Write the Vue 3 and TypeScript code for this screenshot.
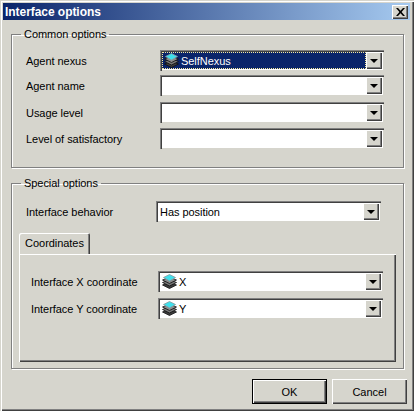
<script setup lang="ts">
interface Row { label: string; value?: string; icon?: boolean; selected?: boolean; cls: string }
const common: Row[] = [
  { label: 'Agent nexus', value: 'SelfNexus', icon: true, selected: true, cls: 'r1' },
  { label: 'Agent name', cls: 'r2' },
  { label: 'Usage level', cls: 'r3' },
  { label: 'Level of satisfactory', cls: 'r4' },
]
const coords: Row[] = [
  { label: 'Interface X coordinate', value: 'X', icon: true, cls: 'c1' },
  { label: 'Interface Y coordinate', value: 'Y', icon: true, cls: 'c2' },
]
</script>

<template>
  <div class="window">
    <div class="titlebar">
      <span class="title">Interface options</span>
      <button class="close" aria-label="Close">
        <svg width="9" height="8" viewBox="0 0 9 8"><path d="M0 0h2l2.5 2.7L7 0h2L5.600 4 9 8H7L4.500 5.300 2 8H0l3.400-4z" fill="#000"/></svg>
      </button>
    </div>

    <fieldset class="group common">
      <legend>Common options</legend>
      <div v-for="r in common" :key="r.label" class="row" :class="r.cls">
        <span class="lbl">{{ r.label }}</span>
        <div class="combo">
          <div class="field" :class="{ sel: r.selected }">
            <svg v-if="r.icon" class="stack" width="15" height="15" viewBox="0 0 15 15">
              <path d="M7.500 8L14.500 11 7.500 14.500 .5 11z" fill="#3a3a3a" stroke="#111" stroke-width=".8"/>
              <path d="M7.500 5.500L14.500 8.500 7.500 12 .5 8.500z" fill="#777" stroke="#111" stroke-width=".8"/>
              <path d="M7.500 3L14.500 6 7.500 9.500 .5 6z" fill="#8a8a8a" stroke="#111" stroke-width=".8"/>
              <path d="M7.500 .5L13.500 3.500 7.500 7 1.500 3.500z" fill="#3fe0ec" stroke="#8a9aa0" stroke-width=".8"/>
            </svg>
            <span>{{ r.value }}</span>
          </div>
          <div class="arrow"><i></i></div>
        </div>
      </div>
    </fieldset>

    <fieldset class="group special">
      <legend>Special options</legend>
      <div class="row behav">
        <span class="lbl">Interface behavior</span>
        <div class="combo">
          <div class="field"><span>Has position</span></div>
          <div class="arrow"><i></i></div>
        </div>
      </div>
      <div class="tabs">
        <div class="tab">Coordinates</div>
        <div class="pane">
          <div v-for="r in coords" :key="r.label" class="row" :class="r.cls">
            <span class="lbl">{{ r.label }}</span>
            <div class="combo">
              <div class="field">
                <svg class="stack" width="15" height="15" viewBox="0 0 15 15">
                  <path d="M7.500 8L14.500 11 7.500 14.500 .5 11z" fill="#3a3a3a" stroke="#111" stroke-width=".8"/>
                  <path d="M7.500 5.500L14.500 8.500 7.500 12 .5 8.500z" fill="#777" stroke="#111" stroke-width=".8"/>
                  <path d="M7.500 3L14.500 6 7.500 9.500 .5 6z" fill="#8a8a8a" stroke="#111" stroke-width=".8"/>
                  <path d="M7.500 .5L13.500 3.500 7.500 7 1.500 3.500z" fill="#3fe0ec" stroke="#8a9aa0" stroke-width=".8"/>
                </svg>
                <span>{{ r.value }}</span>
              </div>
              <div class="arrow"><i></i></div>
            </div>
          </div>
        </div>
      </div>
    </fieldset>

    <div class="buttons">
      <button class="btn default">OK</button>
      <button class="btn">Cancel</button>
    </div>
  </div>
</template>

<style>
html, body { margin: 0; background: #d4d0c8; }
</style>

<style scoped>
.window {
  width: 414px;
  height: 411px;
  box-sizing: border-box;
  padding: 3px 3px 0 3px;
  background: #d6d5cd;
  font: 11px "Liberation Sans", Arial, sans-serif;
  letter-spacing: -0.05px;
  color: #000;
  box-shadow: inset 1px 1px 0 #d6d5cd, inset 2px 2px 0 #fff, inset -1px -1px 0 #404040, inset -2px -2px 0 #808080;
  overflow: hidden;
}
.titlebar {
  height: 17px;
  width: 407px;
  background: linear-gradient(90deg, #0a246a, #a6caf0);
  display: flex;
  align-items: center;
  justify-content: space-between;
  padding: 0 2px 0 2px;
  box-sizing: border-box;
}
.title { color: #fff; font: bold 12px "Liberation Sans", sans-serif; }
.close {
  width: 16px; height: 14px; padding: 0;
  background: #d6d5cd;
  border: 0;
  box-shadow: inset 1px 1px 0 #fff, inset -1px -1px 0 #404040, inset -2px -2px 0 #808080;
  display: flex; align-items: center; justify-content: center;
}
fieldset { margin: 0; padding: 0; min-width: 0; }
.group {
  box-sizing: border-box;
  width: 393px;
  margin-left: 8px;
  border: 1px solid #808080;
  box-shadow: 1px 1px 0 #fff, inset 1px 1px 0 #fff;
}
.group legend { margin-left: 9px; padding: 0 3px; line-height: 14px; }
.common { height: 141px; margin-top: 7px; }
.special { height: 193px; margin-top: 8px; }
.row { display: flex; align-items: center; height: 21px; }
.lbl { white-space: nowrap; }
.combo {
  box-sizing: border-box;
  height: 21px;
  width: 224px;
  display: flex;
  background: #fff;
  padding: 2px;
  box-shadow: inset 1px 1px 0 #808080, inset 2px 2px 0 #404040, inset -1px -1px 0 #d6d5cd;
}
.field {
  flex: 1;
  display: flex;
  align-items: center;
  gap: 2px;
  padding-left: 2px;
  min-width: 0;
}
.field.sel {
  background: #0a246a;
  color: #fff;
  outline: 1px dotted #f5e9a0;
  outline-offset: -1px;
}
.stack { flex: none; }
.arrow {
  width: 16px;
  background: #d6d5cd;
  box-shadow: inset 1px 1px 0 #fff, inset -1px -1px 0 #404040, inset -2px -2px 0 #808080;
  display: flex; align-items: center; justify-content: center;
}
.arrow i {
  width: 0; height: 0;
  border-left: 4px solid transparent;
  border-right: 4px solid transparent;
  border-top: 4px solid #000;
}
.common .row { padding-left: 14px; }
.common .lbl { width: 134px; }
.r1 { margin-top: 9px; }
.r2 { margin-top: 4px; }
.r3 { margin-top: 6px; }
.r4 { margin-top: 5px; }
.behav { padding-left: 14px; margin-top: 11px; }
.behav .lbl { width: 130px; }
.behav .combo { width: 225px; }
.tabs { margin: 11px 0 0 7px; }
.tab {
  box-sizing: border-box;
  width: 71px;
  height: 21px;
  background: #d6d5cd;
  text-align: center;
  line-height: 20px;
  border-radius: 2px 2px 0 0;
  box-shadow: inset 1px 1px 0 #fff, inset -1px 0 0 #404040, inset -2px 0 0 #808080;
}
.pane {
  box-sizing: border-box;
  width: 377px;
  height: 108px;
  padding: 17px 0 0 12px;
  box-shadow: inset 1px 1px 0 #fff, inset -1px -1px 0 #404040, inset -2px -2px 0 #808080;
}
.pane .lbl { width: 127px; }
.pane .combo { width: 225px; }
.c2 { margin-top: 6px; }
.buttons {
  display: flex;
  justify-content: flex-end;
  gap: 5px;
  margin-top: 10px;
  padding-right: 4px;
}
.btn {
  box-sizing: border-box;
  width: 75px;
  height: 25px;
  padding: 0;
  border: 0;
  background: #d6d5cd;
  font: 11px "Liberation Sans", Arial, sans-serif;
  color: #000;
  box-shadow: inset 1px 1px 0 #fff, inset -1px -1px 0 #404040, inset -2px -2px 0 #808080;
}
.btn.default {
  box-shadow: inset 0 0 0 1px #000, inset 2px 2px 0 #fff, inset -2px -2px 0 #404040, inset -3px -3px 0 #808080;
}
</style>
